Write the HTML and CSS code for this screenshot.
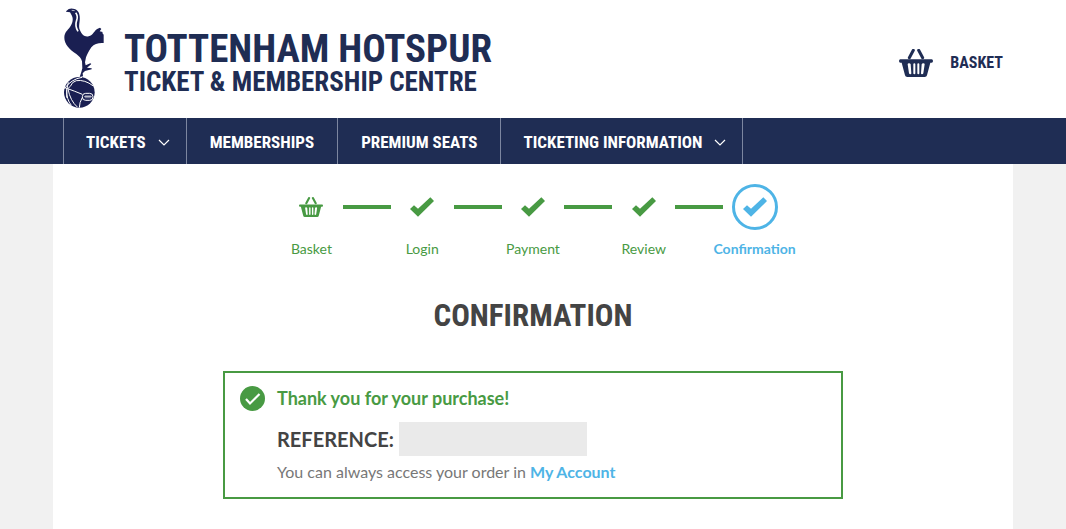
FILE: index.html
```html
<!DOCTYPE html>
<html lang="en">
<head>
<meta charset="utf-8">
<meta name="viewport" content="width=device-width, initial-scale=1">
<title>Confirmation | Tottenham Hotspur Ticket &amp; Membership Centre</title>
<link rel="stylesheet" href="styles.css">
</head>
<body>
<svg class="sprite" aria-hidden="true">
  <symbol id="basket" viewBox="0 0 102 84">
    <path d="M31 26 43 4M71 26 59 4" fill="none" stroke="currentColor" stroke-width="9" stroke-linecap="round"/>
    <path fill="currentColor" fill-rule="evenodd" d="M4 31h94q4 0 4 5t-4 5h-4L84 79q-1 5-7 5H25q-6 0-7-5L8 41H4q-4 0-4-5t4-5ZM26 46l4 27q1 3 4 3t3-3l-2-27q-1-3-5-3t-4 3ZM43 46v27q0 3 3 3t3-3V46q0-3-3-3t-3 3ZM55 46v27q0 3 3 3t3-3V46q0-3-3-3t-3 3ZM68 46l-2 27q0 3 3 3t4-3l4-27q0-3-4-3t-5 3Z"/>
  </symbol>
  <symbol id="tick" viewBox="0 0 72 58">
    <path fill="currentColor" d="M0 35 12 24 24 34 61 0 72 11 24 58Z"/>
  </symbol>
  <symbol id="chevron" viewBox="0 0 12 8">
    <path d="M1 1l5 5 5-5" fill="none" stroke="currentColor" stroke-width="1.2"/>
  </symbol>
</svg>

<header class="site-header">
  <div class="container header-inner">
    <a class="brand" href="#">
      <svg class="crest" viewBox="39 18 126 312" role="img" aria-label="Tottenham Hotspur crest">
        <g fill="#1a1f52">
          <path d="M49 33Q57 24 69 26C82 27 88 37 89 49C91 66 84 78 90 91C95 104 104 112 116 109C130 105 132 92 143 86L150 83 154 87 149 94 158 96 157 99 161 104 161 129C146 128 133 131 124 142C115 155 112 162 108 172L105 187 107 196 121 190 124 192 111 203 125 205 125 208 105 213 98 220 99 229 89 231 94 216 97 205 96 184C93 174 88 169 79 162C58 148 43 132 43 113C43 97 53 91 60 81C68 70 71 57 65 46L60 37 48 35Z"/>
          <circle cx="88" cy="277" r="46"/>
        </g>
        <g fill="none" stroke="#fff" stroke-width="3">
          <path d="M77 38Q85 48 80 61Q74 78 84 94" stroke-width="5"/>
          <path d="M65 31l9 1" stroke-width="2"/>
          <path d="M43 266Q64 237 96 232M43 260Q49 272 61 259Q66 245 79 242Q104 238 130 258M53 266Q73 273 97 283M50 268Q49 298 64 316M54 267Q61 303 82 321M55 247Q48 267 50 293M97 292Q88 308 88 323"/>
          <rect x="97" y="280" width="32" height="21" rx="10"/>
          <path d="M102 290h24M108 285v10M114 285v10M120 285v10" stroke-width="2"/>
        </g>
      </svg>
      <span class="brand-text">
        <span class="brand-name">TOTTENHAM HOTSPUR</span>
        <span class="brand-sub">TICKET &amp; MEMBERSHIP CENTRE</span>
      </span>
    </a>
    <a class="basket-link" href="#">
      <svg class="basket-icon" aria-hidden="true"><use href="#basket"/></svg>
      BASKET
    </a>
  </div>
</header>

<nav class="main-nav" aria-label="Main">
  <ul class="container nav-list">
    <li><a href="#">TICKETS <svg class="chevron" aria-hidden="true"><use href="#chevron"/></svg></a></li>
    <li><a href="#">MEMBERSHIPS</a></li>
    <li><a href="#">PREMIUM SEATS</a></li>
    <li><a href="#">TICKETING INFORMATION <svg class="chevron" aria-hidden="true"><use href="#chevron"/></svg></a></li>
  </ul>
</nav>

<main class="container page">
  <ol class="steps">
    <li class="step"><span class="marker"><svg aria-hidden="true"><use href="#basket"/></svg></span>Basket</li>
    <li class="step"><span class="marker"><svg aria-hidden="true"><use href="#tick"/></svg></span>Login</li>
    <li class="step"><span class="marker"><svg aria-hidden="true"><use href="#tick"/></svg></span>Payment</li>
    <li class="step"><span class="marker"><svg aria-hidden="true"><use href="#tick"/></svg></span>Review</li>
    <li class="step current" aria-current="step"><span class="marker"><span class="ring"><svg aria-hidden="true"><use href="#tick"/></svg></span></span>Confirmation</li>
  </ol>

  <h1 class="title">CONFIRMATION</h1>

  <section class="notice">
    <svg class="notice-icon" viewBox="0 0 25 25" aria-hidden="true">
      <circle cx="12.500" cy="12.500" r="12.500" fill="#489a43"/>
      <path d="M6 13l4 4.500L19.500 8" fill="none" stroke="#fff" stroke-width="2.200"/>
    </svg>
    <div class="notice-body">
      <h2 class="thanks">Thank you for your purchase!</h2>
      <p class="reference">REFERENCE: <span class="reference-value"></span></p>
      <p class="hint">You can always access your order in <a href="#">My Account</a></p>
    </div>
  </section>
</main>
</body>
</html>
```
FILE: styles.css
```css
:root {
  --navy: #1f2d54;
  --green: #489a43;
  --blue: #4eb4e6;
  --display: "Roboto Condensed", "Open Sans Condensed", "Arial Narrow", sans-serif;
}

* { box-sizing: border-box; }

html { height: 100%; }

body {
  display: flex;
  flex-direction: column;
  min-height: 100%;
  margin: 0;
  background: #f1f1f1;
  color: #444;
  font-family: Lato, sans-serif;
}

.sprite {
  display: none;
}

.container {
  width: 100%;
  max-width: 960px;
  margin: 0 auto;
  padding: 0 10px;
}

.site-header { background: #fff; }

.header-inner {
  display: flex;
  align-items: center;
  justify-content: space-between;
  padding-top: 6px;
  padding-bottom: 8px;
}

.brand {
  display: flex;
  align-items: center;
  gap: 19px;
  color: var(--navy);
  text-decoration: none;
}

.crest {
  width: 42px;
  height: 104px;
}

.brand-text {
  display: flex;
  flex-direction: column;
  padding-top: 12px;
  font-family: var(--display);
  font-weight: 700;
}

.brand-name {
  font-size: 39px;
  line-height: 36px;
}

.brand-sub {
  font-size: 27px;
  line-height: 30px;
}

.basket-link {
  display: flex;
  align-items: center;
  gap: 17px;
  padding-top: 10px;
  color: var(--navy);
  font: 700 16px/20px var(--display);
  text-decoration: none;
}

.basket-icon {
  width: 34px;
  height: 28px;
}

.main-nav { background: var(--navy); }

.nav-list {
  display: flex;
  list-style: none;
}

.nav-list li { border-right: 1px solid #7c86a0; }

.nav-list li:first-child { border-left: 1px solid #7c86a0; }

.nav-list a {
  display: flex;
  align-items: center;
  gap: 12px;
  padding: 3px 23px 0;
  color: #fff;
  font: 700 17px/43px var(--display);
  text-decoration: none;
}

.nav-list a:has(.chevron) {
  padding-right: 16px;
  padding-left: 22px;
}

.chevron {
  width: 12px;
  height: 8px;
}

.page {
  flex: 1;
  padding-top: 20px;
  background: #fff;
}

.steps {
  display: grid;
  grid-template-columns: repeat(5, 1fr);
  max-width: 554px;
  margin: 0 auto;
  padding: 0;
  list-style: none;
}

.step {
  color: var(--green);
  font-size: 14px;
  line-height: 20px;
  text-align: center;
}

.marker {
  display: flex;
  align-items: center;
  justify-content: space-between;
  height: 46px;
  margin-bottom: 9px;
}

.marker::before,
.marker::after {
  content: "";
  width: 24px;
  height: 4px;
  background: var(--green);
}

.step:first-child .marker::before,
.step:last-child .marker::after { visibility: hidden; }

.marker svg {
  width: 24px;
  height: 20px;
}

.ring {
  display: flex;
  align-items: center;
  justify-content: center;
  width: 46px;
  height: 46px;
  border: 3px solid var(--blue);
  border-radius: 50%;
}

.current {
  color: var(--blue);
  font-weight: 700;
}

.title {
  margin: 37px 0 35px;
  font: 700 31px/40px var(--display);
  text-align: center;
}

.notice {
  display: flex;
  gap: 12px;
  max-width: 620px;
  margin: 0 auto;
  padding: 13px 15px 14px;
  border: 2px solid var(--green);
}

.notice-icon {
  flex: none;
  width: 25px;
  height: 25px;
}

.notice-body { flex: 1; }

.thanks {
  margin: 0;
  color: var(--green);
  font-size: 18px;
  line-height: 24px;
}

.reference {
  display: flex;
  align-items: center;
  gap: 5px;
  margin: 12px 0 5px;
  font-size: 20px;
  font-weight: 700;
  line-height: 34px;
}

.reference-value {
  width: 188px;
  height: 34px;
  background: #eaeaea;
}

.hint {
  margin: 0;
  color: #777;
  font-size: 16px;
  line-height: 22px;
}

.hint a {
  color: var(--blue);
  font-weight: 700;
  text-decoration: none;
}
```
